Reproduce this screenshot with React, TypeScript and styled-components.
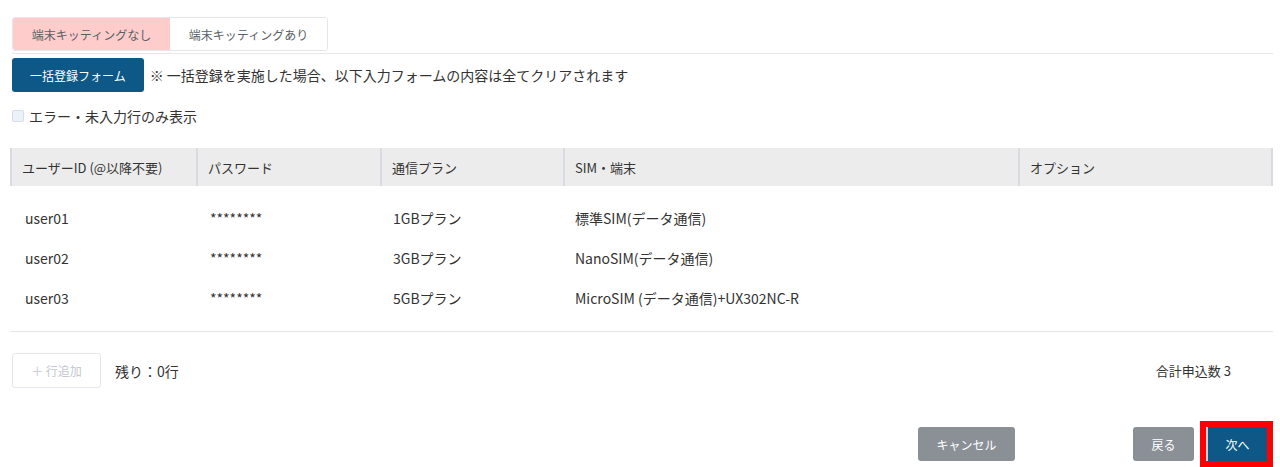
import { FC, Fragment } from 'react';
import styled, { createGlobalStyle } from 'styled-components';

const GlobalStyle = createGlobalStyle`
  html, body {
    margin: 0;
    padding: 0;
    background: #ffffff;
  }
  body {
    font-family: "Noto Sans CJK JP", "Noto Sans", sans-serif;
    color: #333333;
  }
`;

const Page = styled.div`
  width: 1263px;
  padding: 17px 0 0 10px;
  display: flex;
  flex-direction: column;
`;

const TabGroup = styled.div`
  display: flex;
  margin-left: 2px;
  align-self: flex-start;
  border: 1px solid #e4e6ee;
  border-radius: 3px;
  overflow: hidden;
`;

const Tab = styled.div<{ active?: boolean }>`
  height: 32px;
  width: 157px;
  display: flex;
  align-items: center;
  justify-content: center;
  font-size: 12px;
  color: #5a5f66;
  background: ${({ active }) => (active ? '#ffcccc' : '#ffffff')};
`;

const Divider = styled.div`
  height: 1px;
  margin: 2px 0 0 2px;
  background: #e8e8e8;
`;

const BulkRow = styled.div`
  display: flex;
  align-items: center;
  gap: 6px;
  margin: 4px 0 0 2px;
`;

const PrimaryButton = styled.button`
  height: 34px;
  padding: 0 18px;
  border: none;
  border-radius: 3px;
  background: #0d5887;
  color: #ffffff;
  font-family: inherit;
  font-size: 12px;
`;

const Note = styled.span`
  font-size: 14px;
  color: #333333;
`;

const FilterRow = styled.label`
  display: flex;
  align-items: center;
  gap: 5px;
  margin: 13px 0 0 2px;
  height: 22px;
  font-size: 14px;
`;

const CheckBox = styled.span`
  width: 10px;
  height: 10px;
  border: 1px solid #d6deea;
  border-radius: 2px;
  background: #edf1f8;
`;

const columns = '186px 184px 183px 455px 255px';

const Table = styled.div`
  margin-top: 21px;
  display: grid;
  grid-template-columns: ${columns};
`;

const HeadCell = styled.div`
  height: 38px;
  display: flex;
  align-items: center;
  padding-left: 10px;
  background: #ececec;
  border-left: 2px solid #d8dce0;
  font-size: 13px;
  color: #333333;

  &:nth-child(5) {
    border-right: 2px solid #d8dce0;
  }
`;

const Body = styled.div`
  grid-column: 1 / -1;
  display: grid;
  grid-template-columns: ${columns};
  padding: 12px 0 13px;
  border-bottom: 1px solid #e6e6e6;
`;

const Cell = styled.div<{ inset: number }>`
  height: 40px;
  display: flex;
  align-items: center;
  padding-left: ${({ inset }) => inset}px;
  font-size: 14px;
  color: #333333;
`;

const Footer = styled.div`
  display: flex;
  align-items: center;
  margin: 21px 0 0 2px;
  padding-right: 42px;
`;

const AddButton = styled.button`
  width: 89px;
  height: 35px;
  border: 1px solid #e4e7ee;
  border-radius: 3px;
  background: #ffffff;
  color: #c4c8ce;
  font-family: inherit;
  font-size: 12px;
`;

const Remaining = styled.span`
  margin-left: 14px;
  font-size: 14px;
`;

const Total = styled.span`
  margin-left: auto;
  font-size: 13px;
`;

const Actions = styled.div`
  display: flex;
  justify-content: flex-end;
  align-items: center;
  margin-top: 33px;
`;

const GrayButton = styled.button<{ w: number; gapAfter: number }>`
  width: ${({ w }) => w}px;
  height: 34px;
  margin-right: ${({ gapAfter }) => gapAfter}px;
  border: none;
  border-radius: 3px;
  background: #8b9097;
  color: #ffffff;
  font-family: inherit;
  font-size: 12px;
`;

const Highlight = styled.div`
  border: 6px solid #ff0000;
  display: flex;
`;

const NextButton = styled.button`
  width: 61px;
  height: 34px;
  border: none;
  border-left: 2px solid #c9d3dc;
  background: #0d5887;
  color: #ffffff;
  font-family: inherit;
  font-size: 12px;
`;

const headers = ['ユーザーID (@以降不要)', 'パスワード', '通信プラン', 'SIM・端末', 'オプション'];

const rows = [
  { id: 'user01', plan: '1GBプラン', sim: '標準SIM(データ通信)' },
  { id: 'user02', plan: '3GBプラン', sim: 'NanoSIM(データ通信)' },
  { id: 'user03', plan: '5GBプラン', sim: 'MicroSIM (データ通信)+UX302NC-R' },
];

const App: FC = () => (
  <>
    <GlobalStyle />
    <Page>
      <TabGroup>
        <Tab active>端末キッティングなし</Tab>
        <Tab>端末キッティングあり</Tab>
      </TabGroup>
      <Divider />
      <BulkRow>
        <PrimaryButton>一括登録フォーム</PrimaryButton>
        <Note>※ 一括登録を実施した場合、以下入力フォームの内容は全てクリアされます</Note>
      </BulkRow>
      <FilterRow>
        <CheckBox />
        エラー・未入力行のみ表示
      </FilterRow>
      <Table>
        {headers.map((h) => (
          <HeadCell key={h}>{h}</HeadCell>
        ))}
        <Body>
          {rows.map((r) => (
            <Fragment key={r.id}>
              <Cell inset={15}>{r.id}</Cell>
              <Cell inset={14}>********</Cell>
              <Cell inset={13}>{r.plan}</Cell>
              <Cell inset={12}>{r.sim}</Cell>
              <Cell inset={12} />
            </Fragment>
          ))}
        </Body>
      </Table>
      <Footer>
        <AddButton>＋ 行追加</AddButton>
        <Remaining>残り：0行</Remaining>
        <Total>合計申込数 3</Total>
      </Footer>
      <Actions>
        <GrayButton w={97} gapAfter={118}>キャンセル</GrayButton>
        <GrayButton w={61} gapAfter={6}>戻る</GrayButton>
        <Highlight>
          <NextButton>次へ</NextButton>
        </Highlight>
      </Actions>
    </Page>
  </>
);

export default App;
